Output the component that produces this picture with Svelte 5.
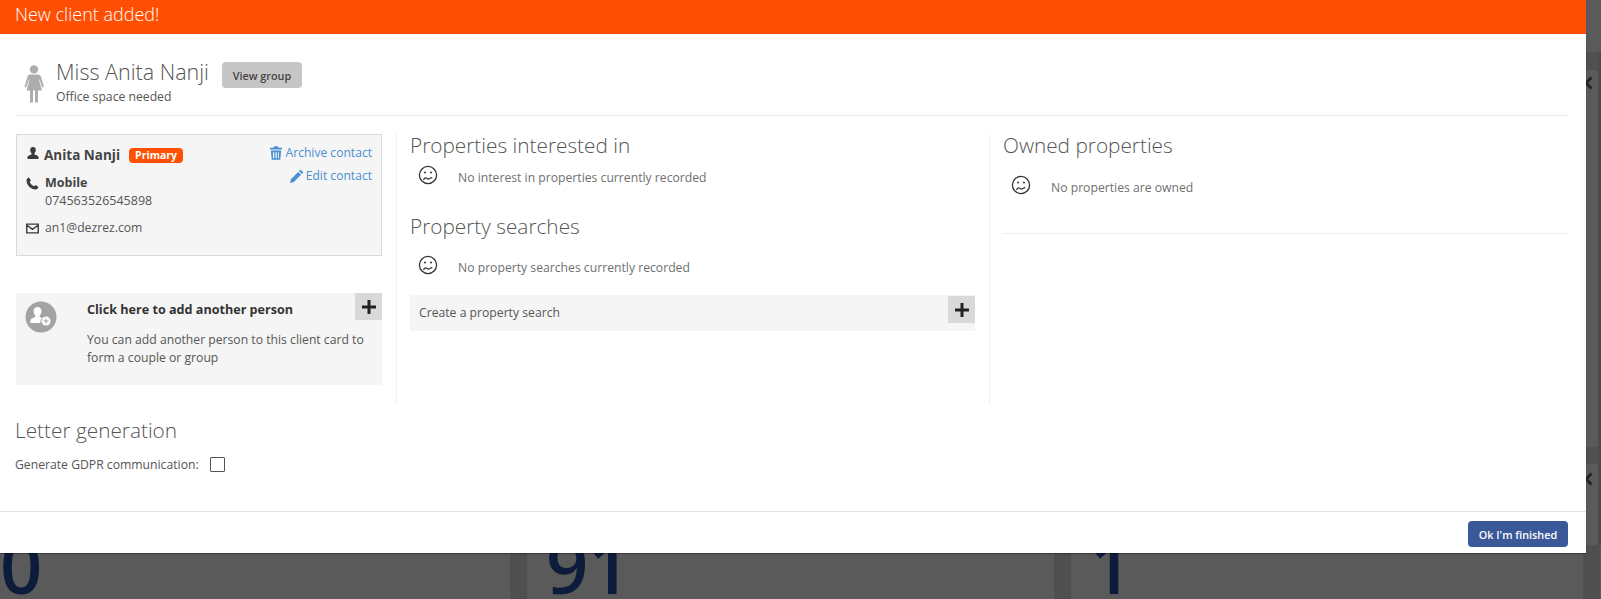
<script>
	const stats = [
		{ value: '0', width: 527 },
		{ value: '91', width: 544 },
		{ value: '1', width: 529 }
	];
	const sadMouth = 'M5.500 15c.8-1.800 2-2.800 3.200-1.800s1.800 1.400 2.800.6 1.600-1.400 2.800-1.200';
</script>

{#snippet sad()}
	<svg class="sad" viewBox="0 0 20 20" width="20" height="20">
		<circle cx="10" cy="10" r="8.600" fill="none" stroke="#333" stroke-width="1.300" />
		<circle cx="7" cy="7.500" r="1" fill="#333" />
		<circle cx="13" cy="7.500" r="1" fill="#333" />
		<path fill="none" stroke="#333" stroke-width="1.200" d={sadMouth} />
	</svg>
{/snippet}

{#snippet plusIcon()}
	<svg viewBox="0 0 14 14" width="14" height="14"><path fill="#222" d="M5.500 0h3v5.500H14v3H8.500V14h-3V8.500H0v-3h5.500z" /></svg>
{/snippet}

{#snippet chevron()}
	<svg class="chevron" viewBox="0 0 9 14" width="9" height="14"><path fill="none" stroke="#242424" stroke-width="3" d="M7.500 1.500L2 7l5.500 5.500" /></svg>
{/snippet}

<div class="page">
	<div class="backdrop">
		<div class="strip"></div>
		<div class="panel first">{@render chevron()}</div>
		<div class="panel second">{@render chevron()}</div>
		<div class="stats">
			{#each stats as stat}
				<div class="stat" style="width: {stat.width}px"><span>{stat.value}</span></div>
			{/each}
		</div>
	</div>

	<div class="modal">
		<div class="banner">New client added!</div>

		<div class="body">
			<header class="client-head">
				<svg class="figure" viewBox="0 0 20 38" width="20" height="38">
					<circle cx="10" cy="4.400" r="4.200" fill="#adadad" />
					<path fill="#adadad" d="M6 9.600h8c1.600 0 2.600.9 3.100 2.400l2.700 9.200c.3 1.200-1.300 1.800-1.800.6l-2.500-7.300-.5.1 3 10.900H14v12h-3v-12h-2v12H6v-12H2.500l3-10.900-.5-.1-2.500 7.300c-.5 1.200-2.100.6-1.800-.6L3.400 12C3.900 10.500 4.400 9.600 6 9.600z" />
				</svg>
				<div class="client-title">
					<div class="name-row">
						<h1>Miss Anita Nanji</h1>
						<button class="view-group">View group</button>
					</div>
					<p>Office space needed</p>
				</div>
			</header>

			<div class="columns">
				<section class="col-people">
					<div class="contact-card">
						<div class="contact-links">
							<a href="#archive">
								<svg class="trash" viewBox="0 0 14 16" width="12" height="14"><path fill="#4a90d2" d="M5 0h4l1 2h4v2H0V2h4zM1 5h12l-1 11H2zm2.500 2v7h1.500V7zm3 0v7h1.500V7zm3 0v7h1V7z" /></svg>
								Archive contact
							</a>
							<a href="#edit">
								<svg viewBox="0 0 14 14" width="14" height="14"><path fill="#4a90d2" d="M10.500.6l2.900 2.900-1.500 1.500L9 2.100zM8.200 2.900l2.900 2.900-7.300 7.300L0 14l.9-3.800z" /></svg>
								Edit contact
							</a>
						</div>
						<div class="contact-row name">
							<svg viewBox="0 0 12 12" width="12" height="12"><path fill="#3a3a3a" d="M6 0c1.800 0 2.800 1.300 2.800 3.100 0 1.300-.6 2.500-1.300 3.200v1.100c1.800.5 4 1.300 4 2.600v2H.5v-2c0-1.300 2.200-2.100 4-2.600V6.300c-.7-.7-1.300-1.900-1.300-3.200C3.200 1.300 4.200 0 6 0z" /></svg>
							<strong>Anita Nanji</strong>
							<span class="primary-tag">Primary</span>
						</div>
						<div class="contact-row phone">
							<svg viewBox="0 0 14 14" width="13" height="13"><path fill="#3a3a3a" d="M3.200.6L5.300 3.700 4 5.300c.8 1.900 2.500 3.700 4.700 4.700l1.600-1.300 3.100 2.100c-.3 1.400-1.500 2.600-3 2.600C5 13.400.6 9 .6 3.600.6 2.100 1.800.9 3.200.6z" /></svg>
							<div>
								<strong>Mobile</strong>
								<div class="number">074563526545898</div>
							</div>
						</div>
						<div class="contact-row mail">
							<svg viewBox="0 0 14 11" width="13" height="11"><path fill="none" stroke="#3a3a3a" stroke-width="1.500" d="M.8.800h12.400v9.400H.8zM1 2l6 4.500L13 2" /></svg>
							<span>an1@dezrez.com</span>
						</div>
					</div>

					<div class="add-person">
						<div class="add-avatar">
							<svg viewBox="0 0 32 32" width="32" height="32">
								<circle cx="16" cy="16" r="15.500" fill="#a3a3a3" />
								<path fill="#fff" transform="translate(-1 -1.500)" d="M13.500 7.500c2.500 0 4 1.900 4 4.300 0 1.800-.8 3.300-1.700 4.300v1.400c.8.200 1.600.6 2.200 1a6 6 0 0 0-1.800 5H6.400v-2.600c0-1.700 3.500-2.900 4.900-3.400v-1.400c-.9-1-1.700-2.500-1.700-4.300 0-2.400 1.400-4.300 3.900-4.300z" />
								<circle cx="21" cy="20" r="4.500" fill="#fff" />
								<path stroke="#a3a3a3" stroke-width="1" d="M21 17.500v5M18.500 20h5" />
							</svg>
						</div>
						<div class="add-text">
							<strong>Click here to add another person</strong>
							<p>You can add another person to this client card to form a couple or group</p>
						</div>
						<span class="plus corner">{@render plusIcon()}</span>
					</div>
				</section>

				<section class="col-interest">
					<h2>Properties interested in</h2>
					<div class="empty first-empty">
						{@render sad()}
						<span>No interest in properties currently recorded</span>
					</div>
					<h2 class="second-title">Property searches</h2>
					<div class="empty search-empty">
						{@render sad()}
						<span>No property searches currently recorded</span>
					</div>
					<div class="create-search">
						<span>Create a property search</span>
						<span class="plus">{@render plusIcon()}</span>
					</div>
				</section>

				<section class="col-owned">
					<h2>Owned properties</h2>
					<div class="empty owned-empty">
						{@render sad()}
						<span>No properties are owned</span>
					</div>
				</section>
			</div>

			<div class="letters">
				<h2>Letter generation</h2>
				<label>
					Generate GDPR communication:
					<span class="checkbox"></span>
				</label>
			</div>
		</div>

		<footer>
			<button class="finish">Ok I'm finished</button>
		</footer>
	</div>
</div>

<style>
	:global(body) {
		margin: 0;
		overflow: hidden;
	}

	.page {
		position: relative;
		width: 1601px;
		height: 599px;
		overflow: hidden;
		background: #5a5a5a;
		font-family: "Open Sans", "Liberation Sans", sans-serif;
		color: #444;
		font-size: 12.200px;
	}

	/* page dimmed behind the dialog */
	.backdrop {
		position: absolute;
		inset: 0;
		background: #505050;
		overflow: hidden;
	}

	.backdrop::before {
		content: '';
		position: absolute;
		left: 0;
		right: 0;
		top: 0;
		height: 52px;
		background: #5a5a5a;
	}

	.strip {
		position: absolute;
		right: 0;
		top: 52px;
		bottom: 0;
		width: 3px;
		background: #4b4b4b;
	}

	.panel {
		position: absolute;
		right: 3px;
		width: 40px;
		background: #5a5a5a;
		border-radius: 3px;
	}

	.panel.first {
		top: 70px;
		height: 377px;
	}

	.panel.second {
		top: 464px;
		height: 135px;
	}

	.chevron {
		position: absolute;
		left: 26px;
		top: 6px;
	}

	.panel.second .chevron {
		top: 8px;
	}

	.stats {
		position: absolute;
		left: 0;
		right: 0;
		top: 545px;
		display: flex;
		background: #5a5a5a;
		height: 54px;
	}

	.stat {
		box-sizing: border-box;
		height: 54px;
		overflow: hidden;
		border-right: 17px solid #4f4f4f;
	}

	.stat span {
		display: block;
		font-size: 74px;
		line-height: 74px;
		margin-top: -16px;
		color: #0d1c3a;
		font-weight: 600;
	}

	.stat:nth-child(2) span,
	.stat:nth-child(3) span {
		padding-left: 19px;
	}

	.modal {
		position: absolute;
		left: 0;
		top: 0;
		width: 1586px;
		height: 553px;
		background: #fff;
		display: flex;
		flex-direction: column;
		box-shadow: 0 1px 1px rgba(0, 0, 0, 0.3);
	}

	.banner {
		height: 34px;
		flex: none;
		box-sizing: border-box;
		padding: 0 15px;
		background: #ff4f04;
		color: #fff;
		font-size: 18px;
		font-weight: 300;
		line-height: 29px;
	}

	.body {
		flex: 1;
		padding: 0 18px 0 16px;
		min-height: 0;
	}

	.client-head {
		display: flex;
		align-items: flex-start;
		height: 82px;
		box-sizing: border-box;
		padding: 23px 0 0 8px;
		border-bottom: 1px solid #e8e8e8;
	}

	.figure {
		margin-top: 8px;
		margin-right: 12px;
		flex: none;
	}

	.name-row {
		display: flex;
		align-items: flex-start;
		gap: 13px;
		height: 30px;
	}

	h1 {
		margin: 0;
		font-size: 21.500px;
		font-weight: 300;
		line-height: 30px;
		color: #555;
	}

	.view-group {
		height: 26px;
		width: 80px;
		margin-top: 5px;
		padding: 0;
		border: none;
		border-radius: 4px;
		background: #c6c6c6;
		color: #444;
		font: 600 10.800px "Open Sans", sans-serif;
	}

	.client-title p {
		margin: 2px 0 0;
		line-height: 16px;
		color: #555;
	}

	.columns {
		display: flex;
		height: 270px;
		margin-top: 18px;
	}

	h2 {
		margin: 0;
		font-size: 20.800px;
		font-weight: 300;
		line-height: 28px;
		color: #555;
	}

	.col-people {
		width: 380px;
		flex: none;
		border-right: 1px solid #efefef;
	}

	.contact-card {
		position: relative;
		width: 366px;
		height: 122px;
		box-sizing: border-box;
		padding: 11px 9px;
		background: #f5f5f5;
		border: 1px solid #d9d9d9;
	}

	.contact-links {
		position: absolute;
		right: 9px;
		top: 9px;
		display: flex;
		flex-direction: column;
		align-items: flex-end;
		gap: 6px;
	}

	.contact-links a {
		display: flex;
		align-items: center;
		gap: 2px;
		color: #4a90d2;
		font-size: 12.100px;
		text-decoration: none;
		line-height: 17px;
	}

	.trash {
		margin-right: 2px;
	}

	.contact-row {
		display: flex;
		gap: 6px;
	}

	.contact-row > svg {
		flex: none;
	}

	.contact-row.name {
		align-items: center;
		height: 18px;
		gap: 5px;
	}

	.contact-row.name svg {
		margin: -4px 0 0 1px;
	}

	.contact-row.name strong {
		font-size: 13.500px;
	}

	.primary-tag {
		margin-left: 4px;
		height: 15px;
		width: 54px;
		border-radius: 4px;
		background: #ff4f04;
		color: #fff;
		font-size: 10.500px;
		font-weight: 700;
		line-height: 15px;
		text-align: center;
	}

	.contact-row.phone {
		margin-top: 10px;
		line-height: 18px;
	}

	.contact-row.phone svg {
		margin-top: 3px;
	}

	.contact-row.phone strong {
		font-size: 12.500px;
	}

	.number {
		color: #555;
		font-size: 12.500px;
	}

	.contact-row.mail {
		margin-top: 9px;
		align-items: center;
		color: #555;
		line-height: 18px;
	}

	.add-person {
		position: relative;
		width: 366px;
		height: 92px;
		margin-top: 37px;
		display: flex;
		background: #f5f5f5;
	}

	.add-avatar {
		flex: none;
		width: 55px;
		padding: 8px 0 0 9px;
		box-sizing: border-box;
		height: 50px;
	}

	.add-text {
		padding: 8px 0 0 16px;
		width: 282px;
	}

	.add-text strong {
		display: block;
		font-size: 12.600px;
		line-height: 18px;
		color: #333;
	}

	.add-text p {
		margin: 12px 0 0;
		line-height: 18px;
		color: #555;
	}

	.plus {
		display: flex;
		flex: none;
		align-items: center;
		justify-content: center;
		width: 27px;
		height: 27px;
		background: #d9d9d9;
	}

	.plus.corner {
		position: absolute;
		top: 0;
		right: 0;
	}

	.col-interest {
		width: 592px;
		flex: none;
		border-right: 1px solid #efefef;
	}

	.col-interest h2 {
		padding-left: 13px;
		margin-top: -3px;
	}

	.empty {
		display: flex;
		align-items: center;
		padding-left: 21px;
		color: #707070;
		height: 24px;
	}

	.sad {
		flex: none;
		margin-right: 20px;
		position: relative;
		top: -2px;
	}

	.first-empty {
		margin-top: 6px;
	}

	.col-interest h2.second-title {
		margin-top: 23px;
	}

	.search-empty {
		margin-top: 15px;
	}

	.create-search {
		display: flex;
		justify-content: space-between;
		margin: 16px 0 0 13px;
		width: 565px;
		height: 36px;
		background: #f5f5f5;
		padding-left: 9px;
		box-sizing: border-box;
		line-height: 36px;
		color: #555;
	}

	.create-search .plus {
		margin-top: 1px;
	}

	.col-owned {
		flex: 1;
		height: 99px;
		border-bottom: 1px solid #efefef;
		margin-left: 12px;
	}

	.col-owned h2 {
		padding-left: 1px;
		margin-top: -3px;
	}

	.owned-empty {
		padding-left: 9px;
		margin-top: 16px;
	}

	.letters {
		margin: 11px 0 0 -1px;
	}

	.letters h2 {
		line-height: 30px;
	}

	.letters label {
		display: flex;
		align-items: center;
		gap: 11px;
		margin-top: 10px;
		height: 18px;
		color: #555;
	}

	.checkbox {
		width: 13px;
		height: 13px;
		border: 1px solid #555;
		border-radius: 1px;
	}

	footer {
		flex: none;
		height: 42px;
		box-sizing: border-box;
		border-top: 1px solid #e2e2e2;
		padding: 9px 18px 0 0;
		display: flex;
		justify-content: flex-end;
	}

	.finish {
		width: 100px;
		height: 26px;
		padding: 0;
		border: none;
		border-radius: 4px;
		background: #3b5998;
		color: #fff;
		font: 600 10.800px "Open Sans", sans-serif;
	}
</style>
